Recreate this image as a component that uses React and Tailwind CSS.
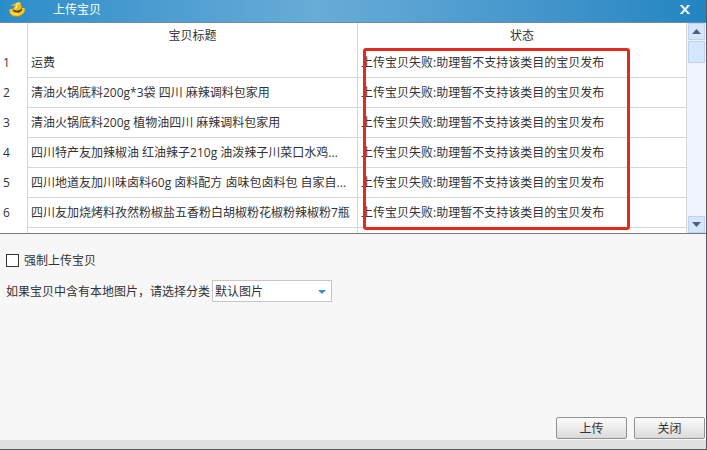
import React, { useState } from "react";

const items = [
  "运费",
  "清油火锅底料200g*3袋 四川 麻辣调料包家用",
  "清油火锅底料200g 植物油四川 麻辣调料包家用",
  "四川特产友加辣椒油 红油辣子210g 油泼辣子川菜口水鸡...",
  "四川地道友加川味卤料60g 卤料配方 卤味包卤料包 自家自...",
  "四川友加烧烤料孜然粉椒盐五香粉白胡椒粉花椒粉辣椒粉7瓶",
];

const status = "上传宝贝失败:助理暂不支持该类目的宝贝发布";

const HatIcon = () => (
  <svg width="18" height="17" viewBox="0 0 18 17" aria-hidden="true">
    <path d="M1.500 9.500C2.500 8 4 8 5.500 9h7.500c1-2 3.800-2.200 3.800-.4 0 3.600-3.300 7.400-8.300 7.400-4.400 0-7.500-3-7-6.500z" fill="#c98d14" />
    <path d="M1.500 8.800C2.500 7.500 4 7.500 5.500 8.500h7.500c1-1.800 3.800-2 3.800-.3 0 3.400-3.300 6.900-8.300 6.900-4.400 0-7.500-2.800-7-6.300z" fill="#f4c824" />
    <path d="M4.600 8.500c.3 4.200 9.100 4.100 9.600-.6l-1-1.200-8 .8z" fill="#4a3a12" />
    <path d="M3 4.500C5.200 4 8 1.200 11 1c1.700 0 2 1.300 2.100 2.700l.6 3.800c-2 2.600-7 3-9 .8.900-1.300 1.900-2.500 2.200-3.800-1.300.3-2.700.6-3.900 0z" fill="#efbd1b" />
    <path d="M8 4.200c.8-1.300 2-1.900 3.200-1.900M7.300 7.600c.9-.9 1.500-1.900 1.800-2.900" fill="none" stroke="#fff08c" strokeWidth="1.200" />
    <path d="M3 11.200c1.300 1.900 4.300 2.600 7.200 1.900" fill="none" stroke="#ffec80" strokeWidth="1" />
  </svg>
);

const ScrollButton = ({ label, up }) => (
  <button
    type="button"
    aria-label={label}
    className="flex h-[17px] w-[17px] items-center justify-center border border-[#bdd2f0] bg-[#d6e6fc]"
  >
    <svg width="9" height="5" viewBox="0 0 9 5" aria-hidden="true">
      <path d={up ? "M0 5L4.500 0 9 5z" : "M0 0h9L4.500 5z"} fill="#4d6185" />
    </svg>
  </button>
);

const TitleBar = () => (
  <header className="flex h-[23px] shrink-0 items-start border-b border-[#6f8ca3] bg-linear-to-r from-[#2a8dc9] via-[#68acd8] via-45% to-[#2085c2] pt-px pr-4 pl-2 text-white">
    <HatIcon />
    <h1 className="ml-[27px] flex-1 leading-[18px]">上传宝贝</h1>
    <button type="button" aria-label="关闭窗口" className="flex h-4 items-center">
      <svg width="10" height="9" viewBox="0 0 10 9" aria-hidden="true">
        <path d="M1.500 .5l7 8M8.500 .5l-7 8" stroke="#e6f3fb" strokeWidth="2" />
        <path d="M0 .5h3M7 .5h3M0 8.500h3M7 8.500h3" stroke="#e6f3fb" strokeWidth="1" />
      </svg>
    </button>
  </header>
);

const ItemTable = () => (
  <div className="relative flex h-[211px] shrink-0 overflow-hidden border-b border-[#77797d] bg-white">
    <div className="min-w-0 flex-1 overflow-hidden border-r border-[#d4d7da]">
      <table className="w-full table-fixed border-separate border-spacing-0 whitespace-nowrap">
        <colgroup>
          <col className="w-7" />
          <col />
          <col className="w-[328px]" />
        </colgroup>
        <thead>
          <tr className="h-[25px]">
            <td className="border-r border-[#d4d7da] p-0" />
            <th className="border-r border-[#d4d7da] p-0 font-normal">宝贝标题</th>
            <th className="p-0 font-normal">状态</th>
          </tr>
        </thead>
        <tbody>
          {items.map((title, i) => (
            <tr key={title} className="h-[30px]">
              <th className="border-r border-[#d4d7da] p-0 pl-[3px] text-left font-normal">{i + 1}</th>
              <td className="overflow-hidden border-r border-b border-[#d4d7da] p-0 pl-[3px]">{title}</td>
              <td className="overflow-hidden border-b border-[#d4d7da] p-0 pl-[3px]">{status}</td>
            </tr>
          ))}
          <tr className="h-[30px]">
            <td className="border-r border-[#d4d7da] p-0" />
            <td className="border-r border-[#d4d7da] p-0" />
            <td className="p-0" />
          </tr>
        </tbody>
      </table>
    </div>
    <div className="flex w-[19px] flex-col items-center bg-[#eff4fc]">
      <ScrollButton label="向上滚动" up />
      <div className="mt-px h-[22px] w-[17px] border border-[#bdd2f0] bg-[#d6e6fc]" />
      <div className="flex-1" />
      <ScrollButton label="向下滚动" />
    </div>
    {/* marks the failed rows */}
    <div className="pointer-events-none absolute top-[25px] left-[363px] h-[182px] w-[267px] rounded-[3px] border-3 border-[#e42a20]" />
  </div>
);

const FooterButton = ({ children }) => (
  <button
    type="button"
    className="h-[22px] w-[71px] rounded-[2px] border border-[#929292] bg-linear-to-b from-[#fcfcfc] to-[#dadada] pt-[2px] leading-4"
  >
    {children}
  </button>
);

const App = () => {
  const [force, setForce] = useState(false);

  return (
    <div className="flex min-h-screen flex-col border-r border-b border-[#55585c] bg-[#f7f7f7] font-['Open_Sans','Noto_Sans_CJK_SC',sans-serif] text-[12px] leading-4 text-[#333]">
      <TitleBar />
      <ItemTable />
      <main className="flex-1 px-[6px] pt-[18px]">
        <div className="flex items-center gap-[5px]">
          <input
            id="force"
            type="checkbox"
            checked={force}
            onChange={(e) => setForce(e.target.checked)}
            className="size-[13px] appearance-none border border-[#333] bg-white checked:bg-[#3d8fd1]"
          />
          <label htmlFor="force" className="pt-px">强制上传宝贝</label>
        </div>
        <div className="mt-[11px] flex items-center gap-[2px]">
          <label htmlFor="category" className="pt-px">如果宝贝中含有本地图片，请选择分类</label>
          <div className="relative">
            <select
              id="category"
              className="block h-[22px] w-[120px] appearance-none border border-[#c6c6c6] bg-white pt-px pl-[2px]"
            >
              <option>默认图片</option>
            </select>
            <svg className="pointer-events-none absolute top-[10px] right-[6px]" width="8" height="4" viewBox="0 0 8 4" aria-hidden="true">
              <path d="M0 0h8L4 4z" fill="#3d8fd1" />
            </svg>
          </div>
        </div>
      </main>
      <div className="flex justify-end gap-[7px] pr-px pb-px">
        <FooterButton>上传</FooterButton>
        <FooterButton>关闭</FooterButton>
      </div>
      <footer className="h-[9px] shrink-0 bg-[#e0e0e0]" />
    </div>
  );
};

export default App;
